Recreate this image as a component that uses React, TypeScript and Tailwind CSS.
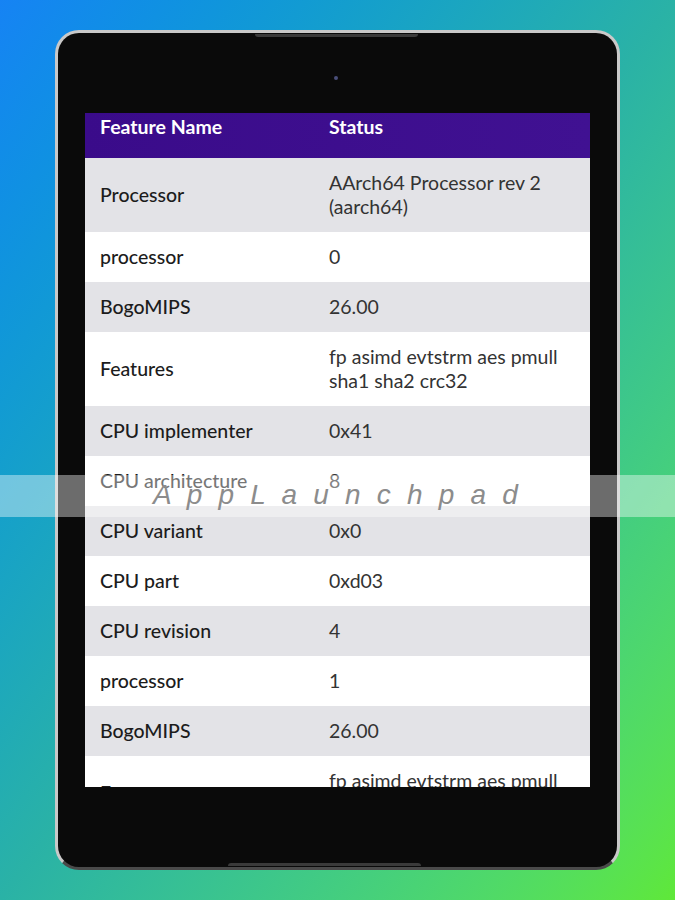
import React from 'react';

type Row = { name: string; value: string };

const rows: Row[] = [
  { name: 'Processor', value: 'AArch64 Processor rev 2 (aarch64)' },
  { name: 'processor', value: '0' },
  { name: 'BogoMIPS', value: '26.00' },
  { name: 'Features', value: 'fp asimd evtstrm aes pmull sha1 sha2 crc32' },
  { name: 'CPU implementer', value: '0x41' },
  { name: 'CPU architecture', value: '8' },
  { name: 'CPU variant', value: '0x0' },
  { name: 'CPU part', value: '0xd03' },
  { name: 'CPU revision', value: '4' },
  { name: 'processor', value: '1' },
  { name: 'BogoMIPS', value: '26.00' },
  { name: 'Features', value: 'fp asimd evtstrm aes pmull sha1 sha2 crc32' },
];

function FeatureTable() {
  return (
    <div className="h-[674px] overflow-hidden bg-white font-['Lato','Noto_Sans',sans-serif]">
      <div className="grid h-[45px] grid-cols-[229px_1fr] bg-linear-to-r from-[#3a0b8a] to-[#401192] px-[15px] pt-[2px] text-[19.5px] font-bold leading-[24px] text-white">
        <div>Feature Name</div>
        <div>Status</div>
      </div>
      {rows.map((r, i) => (
        <div
          key={i}
          className={`grid grid-cols-[229px_1fr] items-center px-[15px] py-[13px] text-[19.5px] leading-[24px] ${
            i % 2 === 0 ? 'bg-[#e3e3e7]' : 'bg-white'
          }`}
        >
          <div className="font-medium text-[#1c1c1c]">{r.name}</div>
          <div className="pr-[12px] text-[#333333]">{r.value}</div>
        </div>
      ))}
    </div>
  );
}

export default function App() {
  return (
    <div className="relative flex h-[900px] w-full items-center justify-center overflow-hidden bg-linear-to-br from-[#1683f4] via-[#2ab2a6] to-[#5fe838]">
      <div className="relative h-[840px] w-[565px] rounded-[24px] border-[3px] border-[#c9c9c9] border-b-[#4a4a4a] bg-[#0a0a0a] px-[27px] pt-[80px]">
        {/* top & bottom notches */}
        <div className="absolute left-[197px] top-[1px] h-[3px] w-[163px] rounded-b-sm bg-[#3a3a3a]" />
        <div className="absolute bottom-[1px] left-[170px] h-[3px] w-[193px] rounded-t-sm bg-[#3a3a3a]" />
        {/* camera */}
        <div className="absolute left-[276px] top-[43px] h-[4px] w-[4px] rounded-full bg-[#4a4f7a]" />
        <FeatureTable />
      </div>
      {/* watermark band */}
      <div className="absolute left-0 right-0 top-[475px] flex h-[42px] items-center justify-center bg-white/40 pb-[3px]">
        <span className="font-['Liberation_Sans',Arial,sans-serif] text-[28px] italic tracking-[4.2px] text-[#8c8c8c]">
          A p p L a u n c h p a d
        </span>
      </div>
    </div>
  );
}
